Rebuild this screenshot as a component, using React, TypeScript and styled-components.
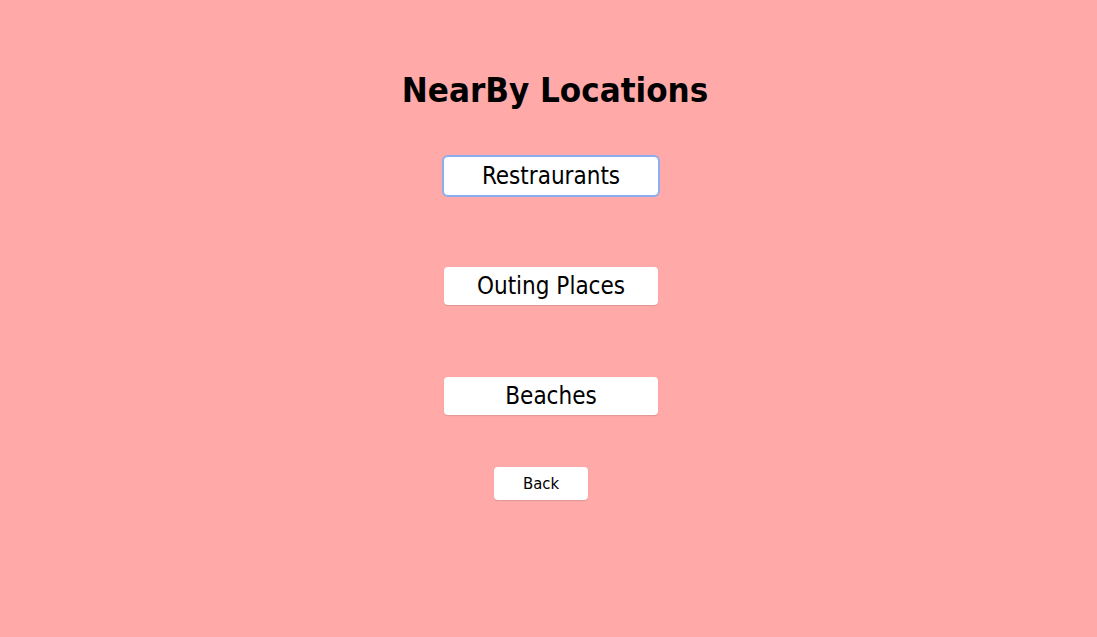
import React from 'react';
import styled, { createGlobalStyle } from 'styled-components';

const GlobalStyle = createGlobalStyle`
  html, body {
    margin: 0;
    padding: 0;
    background: #ffa9a9;
    font-family: "DejaVu Sans Condensed", "DejaVu Sans", sans-serif;
  }
`;

const Page = styled.div`
  width: 1097px;
  height: 637px;
  background: #ffa9a9;
  display: flex;
  flex-direction: column;
  align-items: center;
  padding-top: 70px;
  box-sizing: border-box;
`;

const Title = styled.h1`
  margin: 0 0 47px 13px;
  font-size: 34.6px;
  line-height: 40px;
  font-weight: bold;
  color: #000;
`;

const Menu = styled.div`
  display: flex;
  flex-direction: column;
  align-items: center;
  gap: 72px;
  margin-left: 5px;
`;

const OptionButton = styled.button<{ $focused?: boolean }>`
  width: 214px;
  height: 38px;
  background: #fff;
  border: none;
  border-radius: 4px;
  font-family: inherit;
  font-size: 24px;
  color: #000;
  box-shadow: ${(p) => (p.$focused ? '0 0 0 2px #8aaef0' : '0 1px 1px rgba(0,0,0,0.12)')};
  cursor: pointer;
  padding: 0;
`;

const BackButton = styled.button`
  margin-top: 52px;
  margin-right: 15px;
  width: 94px;
  height: 33px;
  background: #fff;
  border: none;
  border-radius: 4px;
  font-family: inherit;
  font-size: 16.5px;
  color: #000;
  box-shadow: 0 1px 1px rgba(0,0,0,0.12);
  cursor: pointer;
  padding: 0;
`;

const options = ['Restraurants', 'Outing Places', 'Beaches'];

const App = () => {
  return (
    <>
      <GlobalStyle />
      <Page>
        <Title>NearBy Locations</Title>
        <Menu>
          {options.map((name, i) => (
            <OptionButton key={name} $focused={i === 0}>
              {name}
            </OptionButton>
          ))}
        </Menu>
        <BackButton>Back</BackButton>
      </Page>
    </>
  );
};

export default App;
